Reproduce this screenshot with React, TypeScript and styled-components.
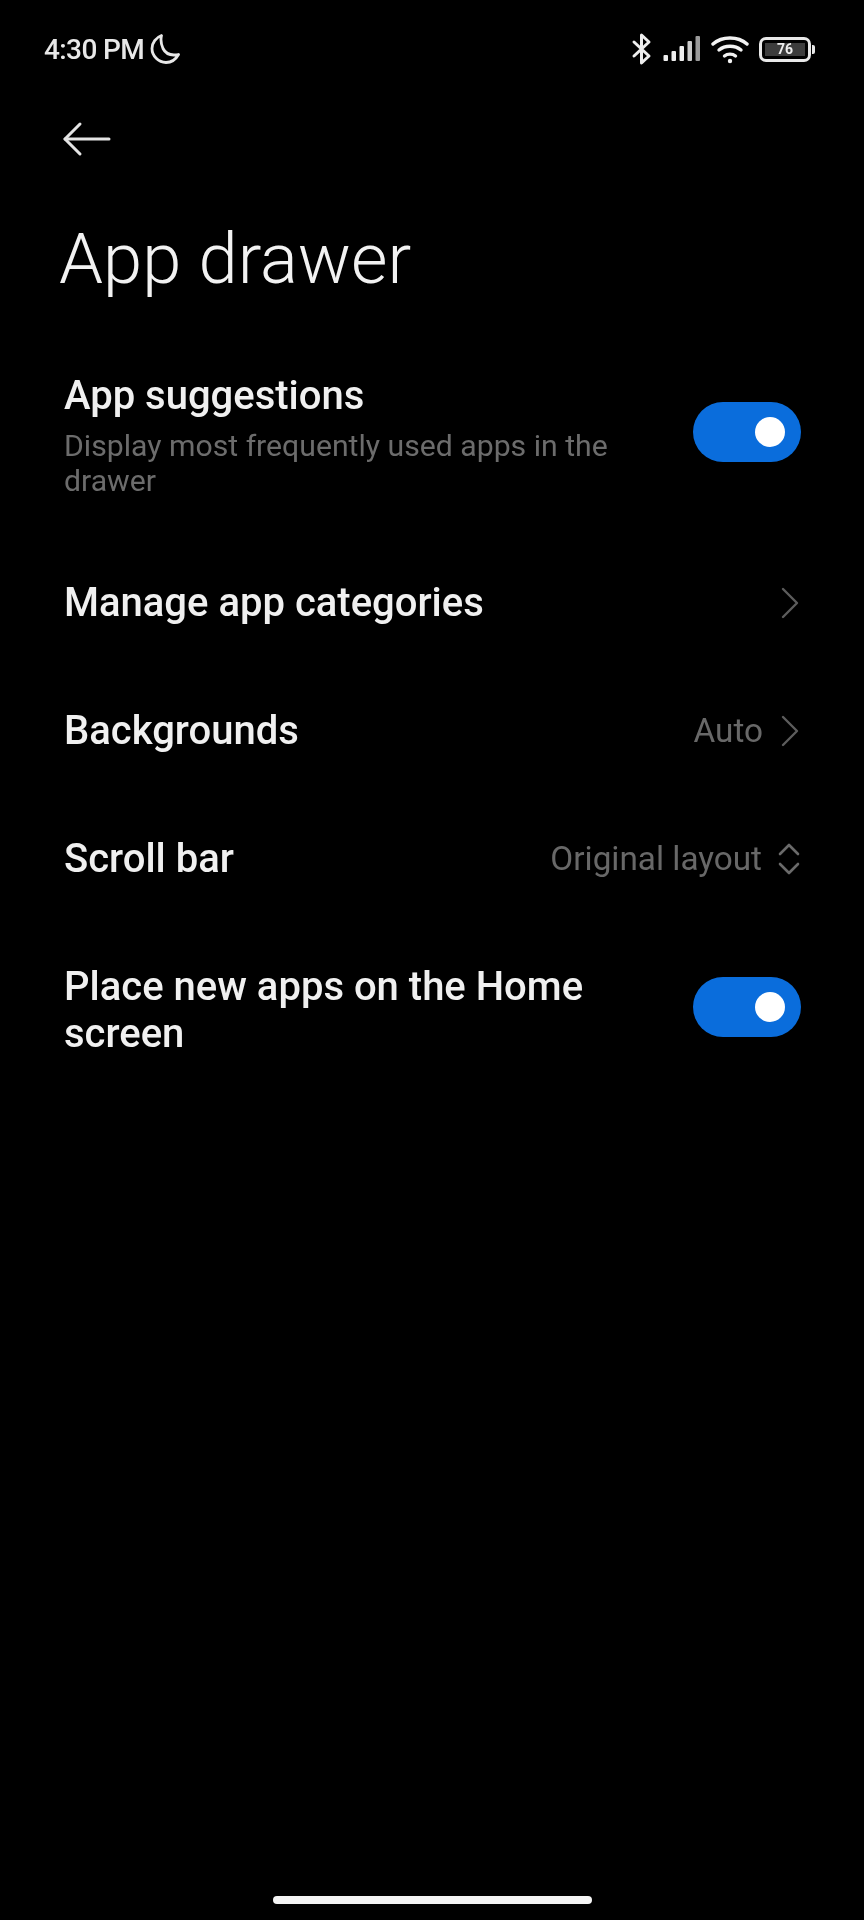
import React from 'react';
import styled, { createGlobalStyle } from 'styled-components';

const GlobalStyle = createGlobalStyle`
  html, body {
    margin: 0;
    padding: 0;
    background: #000;
  }
`;

function Moon() {
  return (
    <svg width="30" height="32" viewBox="0 0 30 32" fill="none" stroke="#e8e8e8" strokeWidth="2.800" strokeLinejoin="round">
      <path d="M11.500 2.500C6 4.500 2 10 2 15.500C2 23 8.500 29.500 16 29.500C21.500 29.500 26 26 28.500 21.500C21 23 15.500 20.500 13 15.500C11 11 10.500 6.500 11.500 2.500Z" />
    </svg>
  );
}

function Bluetooth() {
  return (
    <svg width="22" height="34" viewBox="0 0 22 34" fill="none" stroke="#eee" strokeWidth="3" strokeLinejoin="round" strokeLinecap="round">
      <path d="M3 10L18 24L10.500 31V3L18 10L3 24" />
    </svg>
  );
}

function Signal() {
  return (
    <svg width="38" height="26" viewBox="0 0 38 26" fill="#eee">
      <rect x="0.500" y="19" width="4.500" height="6" rx="1" />
      <rect x="8.500" y="15" width="4.500" height="10" rx="1" />
      <rect x="16.500" y="10" width="4.500" height="15" rx="1" />
      <rect x="24.500" y="5" width="4.500" height="20" rx="1" opacity="0.85" />
      <rect x="32.500" y="0" width="4.500" height="25" rx="1" opacity="0.65" />
    </svg>
  );
}

function Wifi() {
  return (
    <svg width="38" height="30" viewBox="0 0 38 30" fill="none" stroke="#f2f2f2" strokeWidth="3.400" strokeLinecap="round">
      <path d="M2 10C11 2 27 2 36 10" />
      <path d="M8 16C14 11 24 11 30 16" />
      <path d="M13.500 22C16.500 19.500 21.500 19.500 24.500 22" />
      <circle cx="19" cy="27" r="2.200" fill="#f2f2f2" stroke="none" />
    </svg>
  );
}

function UpDown() {
  return (
    <svg width="24" height="34" viewBox="0 0 24 34" fill="none" stroke="#6a6a6a" strokeWidth="2.600" strokeLinecap="round" strokeLinejoin="round">
      <path d="M3 12L12 3L21 12" />
      <path d="M3 22L12 31L21 22" />
    </svg>
  );
}

function BackArrow() {
  return (
    <svg width="50" height="36" viewBox="0 0 50 36" fill="none" stroke="#e4e4e4" strokeWidth="3" strokeLinecap="round" strokeLinejoin="round">
      <path d="M47 18H3" />
      <path d="M18 3L3 18L18 33" />
    </svg>
  );
}

export default function App() {
  return (
    <Screen>
      <GlobalStyle />
      <StatusBar>
        <StatusLeft>
          <Time>4:30 PM</Time>
          <Moon />
        </StatusLeft>
        <StatusRight>
          <Bluetooth />
          <Signal />
          <Wifi />
          <Battery>
            <BatteryBody>
              <BatteryLevel>76</BatteryLevel>
            </BatteryBody>
            <BatteryCap />
          </Battery>
        </StatusRight>
      </StatusBar>

      <BackButton>
        <BackArrow />
      </BackButton>
      <Title>App drawer</Title>

      <List>
        <Row>
          <RowText>
            <RowTitle>App suggestions</RowTitle>
            <RowDesc>Display most frequently used apps in the drawer</RowDesc>
          </RowText>
          <Toggle />
        </Row>
        <Row>
          <RowTitle>Manage app categories</RowTitle>
          <RowValue>
            <Chevron />
          </RowValue>
        </Row>
        <Row>
          <RowTitle>Backgrounds</RowTitle>
          <RowValue>
            Auto
            <Chevron />
          </RowValue>
        </Row>
        <Row>
          <RowTitle>Scroll bar</RowTitle>
          <RowValue>
            Original layout
            <UpDown />
          </RowValue>
        </Row>
        <Row>
          <RowText>
            <RowTitle>Place new apps on the Home screen</RowTitle>
          </RowText>
          <Toggle />
        </Row>
      </List>

      <HomeBar />
    </Screen>
  );
}

const Screen = styled.div`
  position: relative;
  width: 864px;
  height: 1920px;
  overflow: hidden;
  background: #000;
  color: #f0f0f0;
  font-family: Roboto, 'Liberation Sans', sans-serif;
  filter: blur(0.6px);
`;

const StatusBar = styled.div`
  display: flex;
  align-items: center;
  justify-content: space-between;
  height: 50px;
  padding: 24px 49px 0 44px;
`;

const StatusLeft = styled.div`
  display: flex;
  align-items: center;
  gap: 6px;
`;

const Time = styled.span`
  font-size: 28px;
  font-weight: 500;
  letter-spacing: -0.6px;
  color: #e8e8e8;
`;

const StatusRight = styled.div`
  display: flex;
  align-items: center;
  gap: 10px;
`;

const Battery = styled.div`
  display: flex;
  align-items: center;
`;

const BatteryBody = styled.div`
  width: 52px;
  height: 25px;
  box-sizing: border-box;
  border: 3px solid #e8e8e8;
  border-radius: 7px;
  padding: 3px;
`;

const BatteryLevel = styled.div`
  height: 100%;
  width: 100%;
  background: #3c3c3c;
  color: #eee;
  font-size: 14px;
  font-weight: 700;
  line-height: 13px;
  text-align: center;
`;

const BatteryCap = styled.div`
  width: 3px;
  height: 9px;
  margin-left: 1px;
  background: #e8e8e8;
  border-radius: 0 2px 2px 0;
`;

const BackButton = styled.div`
  display: flex;
  padding: 47px 0 0 62px;
`;

const Title = styled.h1`
  margin: 58px 0 0 59px;
  font-size: 70.5px;
  font-weight: 300;
  line-height: 88px;
  color: #f2f2f2;
`;

const List = styled.div`
  display: flex;
  flex-direction: column;
  margin-top: 29px;
  padding: 0 63px 0 64px;
`;

const Row = styled.div`
  display: flex;
  align-items: center;
  justify-content: space-between;
  padding: 40px 0 41px;
`;

const RowText = styled.div`
  display: flex;
  flex-direction: column;
  width: 570px;
`;

const RowTitle = styled.div`
  font-size: 40px;
  font-weight: 500;
  line-height: 47px;
  color: #f0f0f0;
`;

const RowDesc = styled.div`
  margin-top: 9px;
  font-size: 30.2px;
  line-height: 35px;
  color: #6c6c6c;
`;

const RowValue = styled.div`
  display: flex;
  align-items: center;
  gap: 15px;
  font-size: 33.3px;
  line-height: 47px;
  color: #686868;
`;

const ChevronSvg = styled.svg`
  margin: 0 2px 0 3px;
`;

function Chevron() {
  return (
    <ChevronSvg width="18" height="32" viewBox="0 0 18 32" fill="none" stroke="#5c5c5c" strokeWidth="2.400" strokeLinecap="round" strokeLinejoin="round">
      <path d="M2 2L16 16L2 30" />
    </ChevronSvg>
  );
}

const Toggle = styled.div`
  position: relative;
  flex: none;
  width: 108px;
  height: 60px;
  margin-bottom: 6px;
  border-radius: 30px;
  background: #0a6ddc;

  &::after {
    content: '';
    position: absolute;
    top: 15px;
    right: 16px;
    width: 30px;
    height: 30px;
    border-radius: 50%;
    background: #fff;
  }
`;

const HomeBar = styled.div`
  position: absolute;
  left: 273px;
  bottom: 16px;
  width: 319px;
  height: 8px;
  border-radius: 4px;
  background: #f4f4f4;
`;
